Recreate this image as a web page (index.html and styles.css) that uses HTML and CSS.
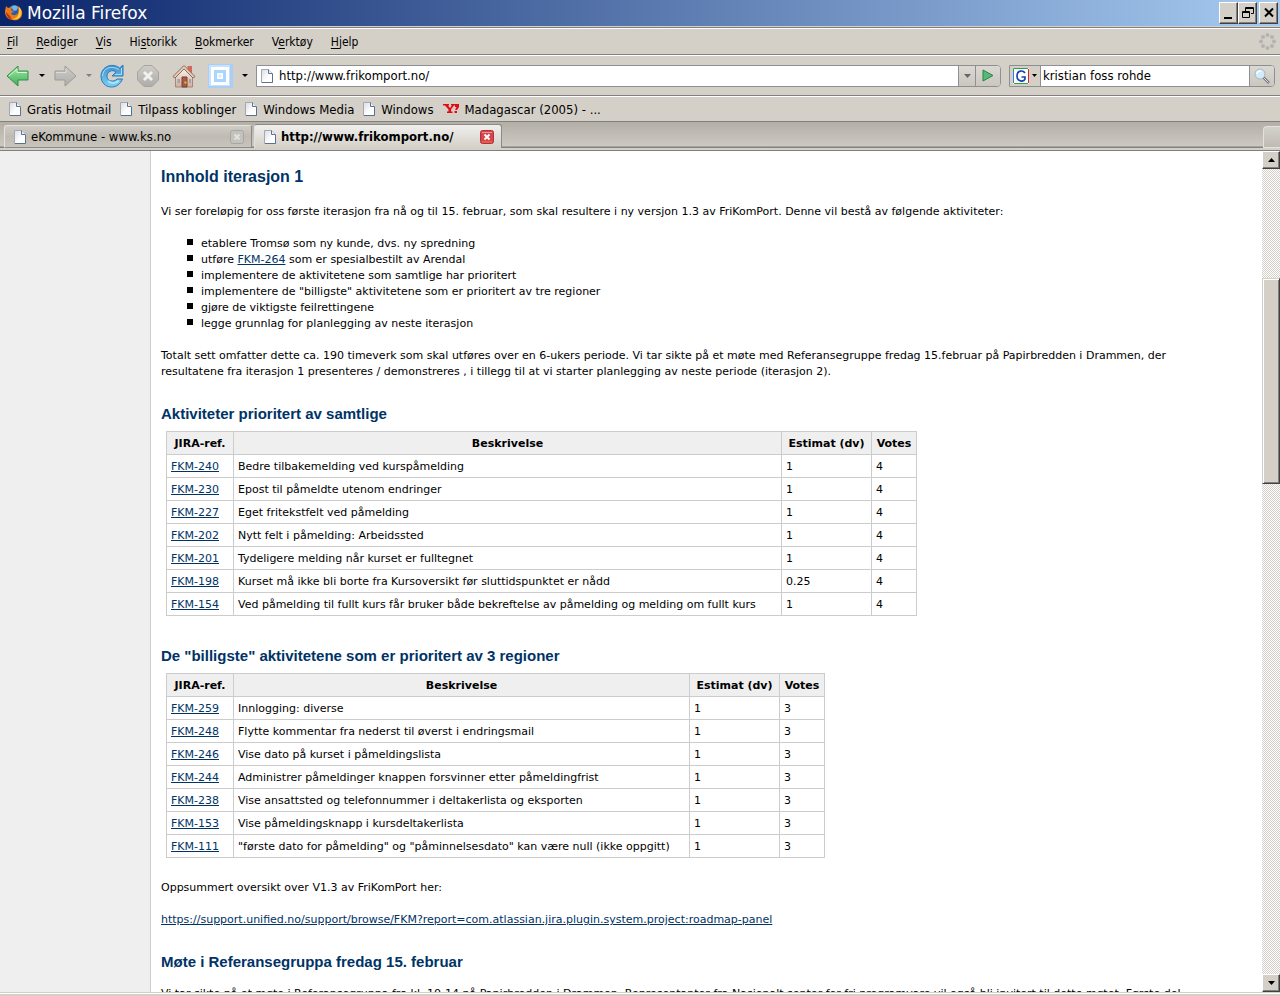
FILE: index.html
```html
<!DOCTYPE html>
<html lang="no">
<head>
<meta charset="utf-8">
<title>Mozilla Firefox</title>
<link rel="stylesheet" href="styles.css">
</head>
<body>
<svg class="defs" width="0" height="0" aria-hidden="true">
  <defs>
    <linearGradient id="paper" x1="0" y1="0" x2="1" y2="1"><stop offset="0" stop-color="#d9dce3"/><stop offset=".6" stop-color="#fff"/></linearGradient>
    <linearGradient id="green" x1="0" y1="0" x2="0" y2="1"><stop offset="0" stop-color="#a5e8a6"/><stop offset="1" stop-color="#3fae57"/></linearGradient>
    <linearGradient id="grey" x1="0" y1="0" x2="0" y2="1"><stop offset="0" stop-color="#cfcdc9"/><stop offset="1" stop-color="#aeaca8"/></linearGradient>
    <linearGradient id="blue" x1="0" y1="0" x2="0" y2="1"><stop offset="0" stop-color="#3c8fd2"/><stop offset="1" stop-color="#7cd0f5"/></linearGradient>
    <linearGradient id="wall" x1="0" y1="0" x2="0" y2="1"><stop offset="0" stop-color="#fbf3ea"/><stop offset="1" stop-color="#cdb09a"/></linearGradient>
    <symbol id="page" viewBox="0 0 12 14"><path d="M.5.5h7l4 4v9H.5z" fill="url(#paper)" stroke="#a3a8b4"/><path d="M11.500 5v8.500H1" fill="none" stroke="#5c7090"/><path d="M7.500.5v4h4" fill="#eef0f5" stroke="#5c7090"/></symbol>
  </defs>
</svg>
<div class="window">
  <header class="titlebar">
    <svg class="fox" width="18" height="18" viewBox="0 0 18 18"><circle cx="9.500" cy="8" r="7" fill="#2c5cae"/><path d="M6 3c2-2 5-2 7 0l-1 3-3 1z" fill="#74b4e6"/><path d="M1 2l2 2 4-1-1 3 3 2-3 1c1 3 5 3 7 0 1-3 0-5-1-7 4 2 6 5 5 9-1 4-5 6-9 5C3 16 0 12 0 8c0-3 1-4 1-6z" fill="#ea7a18"/><path d="M14 3c3 3 3 7 1 10-2 2-5 3-8 2 5 0 8-4 7-12z" fill="#ffd23c"/><path d="M1 8c0 4 3 7 6 8l-2-4z" fill="#bd3410"/></svg>
    <span class="caption">Mozilla Firefox</span>
    <button class="winbtn" aria-label="Minimer"><svg width="14" height="14" viewBox="0 0 14 14"><path d="M2 11h8v2H2z"/></svg></button>
    <button class="winbtn" aria-label="Gjenopprett"><svg width="14" height="14" viewBox="0 0 14 14" fill="none" stroke="#000"><path d="M4.500 5V1.500h8v6H10M4 2.500h9M1.500 5.500h7v6h-7zM1 6.500h8"/></svg></button>
    <button class="winbtn close" aria-label="Lukk"><svg width="14" height="14" viewBox="0 0 14 14"><path d="M3 2.500l8 8M11 2.500l-8 8" stroke="#000" stroke-width="2"/></svg></button>
  </header>

  <nav class="menubar" aria-label="Meny">
    <button><u>F</u>il</button><button><u>R</u>ediger</button><button><u>V</u>is</button><button>Hi<u>s</u>torikk</button><button><u>B</u>okmerker</button><button>V<u>e</u>rktøy</button><button><u>H</u>jelp</button>
    <svg class="throbber" width="17" height="17" viewBox="0 0 17 17" fill="#b5b3af"><circle cx="8.500" cy="2" r="2"/><circle cx="13" cy="4" r="2"/><circle cx="15" cy="8.500" r="2"/><circle cx="13" cy="13" r="2"/><circle cx="8.500" cy="15" r="2"/><circle cx="4" cy="13" r="2"/><circle cx="2" cy="8.500" r="2"/><circle cx="4" cy="4" r="2"/></svg>
  </nav>

  <div class="toolbar">
    <button class="tool" aria-label="Tilbake"><svg width="24" height="24" viewBox="0 0 24 24"><path d="M1 12L12 2v5h10v9H12v6z" fill="url(#green)" stroke="#2f8f4a"/><path d="M3 12l8-7v3.500h10" fill="none" stroke="#d3f7cf"/></svg></button>
    <button class="drop" aria-label="Tilbakehistorikk"></button>
    <button class="tool" aria-label="Frem" disabled><svg width="24" height="24" viewBox="0 0 24 24"><path d="M23 12L12 2v5H2v9h10v6z" fill="url(#grey)" stroke="#9d9b97"/><path d="M3 8.500h10V5" fill="none" stroke="#dedcd8"/></svg></button>
    <button class="drop dim" aria-label="Fremhistorikk" disabled></button>
    <button class="tool reload" aria-label="Oppdater"><svg width="24" height="24" viewBox="0 0 24 24"><path d="M23 1v11H12l4-4C12 5 7 7.500 7 12.500c0 5 7 6 10 2.500h5.500c-2 5-6 8-11 8C5 23 1 18 1 12 1 3 12-2 19.500 4z" fill="url(#blue)" stroke="#2c7ab9"/><path d="M2.500 12C3 4 11 1 19 5.500M15 10.500h6.500V4" fill="none" stroke="#a8dcf5"/><path d="M8 17c3 3 8 2.500 11-.5" fill="none" stroke="#a9e4fa" stroke-width="2"/></svg></button>
    <button class="tool stop" aria-label="Stopp" disabled><svg width="24" height="24" viewBox="0 0 24 24"><path d="M8 1.500h8L22.500 8v8L16 22.500H8L1.500 16V8z" fill="url(#grey)" stroke="#a6a4a0"/><path d="M8 8l8 8M16 8l-8 8" stroke="#f2f1ee" stroke-width="3"/></svg></button>
    <button class="tool home" aria-label="Hjem"><svg width="24" height="24" viewBox="0 0 24 24"><path d="M15.500 2h4.500v8l-4.500-4z" fill="#d2695a"/><path d="M3.500 12L12 4l8.500 8v11h-17z" fill="url(#wall)" stroke="#a98673"/><path d="M1 12.500L12 1.500l11 11-2 1.500-9-9-9 9z" fill="#ddcdbf" stroke="#8f6c5c"/><path d="M10 13h5v10h-5z" fill="#a85a48" stroke="#7b4337"/><path d="M5.500 15h2.500v4H5.500zM17 15h2v4h-2z" fill="#a8a0a4"/><path d="M12.500 17.500h2v2h-2z" fill="#efc431"/></svg></button>
    <button class="tool" aria-label="Bilder"><svg width="25" height="24" viewBox="0 0 25 24"><path d="M0 0h25v24H0z" fill="#a8cffa"/><path d="M1 1h21v21H1z" fill="#c9e2fc"/><path d="M3 3h18v18H3z" fill="#fff"/><path d="M6 6h12v12H6z" fill="#a9d6fc"/><path d="M9 9h6v6H9z" fill="#fff"/><path d="M10.500 10.500h3v3h-3z" fill="#d8ecfe"/></svg></button>
    <button class="drop" aria-label="Bildevalg"></button>
    <form class="address">
      <svg width="12" height="14"><use href="#page"/></svg>
      <input type="text" aria-label="Adresse" value="http://www.frikomport.no/">
      <button type="button" class="fieldbtn hist" aria-label="Adressehistorikk"><svg width="7" height="4" viewBox="0 0 7 4"><path d="M0 0h7L3.500 4z" fill="#666"/></svg></button>
      <button type="button" class="fieldbtn go" aria-label="Gå"><svg width="12" height="13" viewBox="0 0 12 13"><path d="M1 1l10 5.500L1 12z" fill="#59b877" stroke="#218747"/></svg></button>
    </form>
    <form class="search">
      <button type="button" class="engine" aria-label="Søkemotor"><svg width="16" height="16" viewBox="0 0 16 16"><path d="M0 0h16v16H0z" fill="#fff"/><path d="M.5 15V.5H15" fill="none" stroke="#27a24a"/><path d="M15.500 1v14" stroke="#e02222"/><path d="M.5 4v11" stroke="#3979e0"/><path d="M1 15.500h14" stroke="#2ca743"/><path d="M12 5c-2-3-8-3-8 3s7 6 8 3V9H8.500" fill="none" stroke="#1b3fb4" stroke-width="1.700"/></svg><svg width="5" height="3" viewBox="0 0 5 3"><path d="M0 0h5L2.500 3z"/></svg></button>
      <input type="text" aria-label="Søk" value="kristian foss rohde">
      <button type="button" class="fieldbtn find" aria-label="Søk"><svg width="16" height="16" viewBox="0 0 16 16"><path d="M9 9l6 6" stroke="#74777d" stroke-width="2.500"/><path d="M9 9l5.500 5.500" stroke="#d8dade"/><circle cx="6" cy="6" r="5" fill="#d2eafa" stroke="#a4b6c6"/><path d="M3 6c0-2 2-3 4-3" stroke="#fff" fill="none" stroke-width="1.500"/></svg></button>
    </form>
  </div>

  <nav class="bookmarks" aria-label="Bokmerker">
    <a href="#"><svg width="12" height="14"><use href="#page"/></svg>Gratis Hotmail</a>
    <a href="#"><svg width="12" height="14"><use href="#page"/></svg>Tilpass koblinger</a>
    <a href="#"><svg width="12" height="14"><use href="#page"/></svg>Windows Media</a>
    <a href="#"><svg width="12" height="14"><use href="#page"/></svg>Windows</a>
    <a href="#"><svg class="yahoo" width="16" height="10" viewBox="0 0 16 10"><path d="M0 0h6v1.500H5L7 4l2-2.500H8V0h4v1.500h-1L8 5.500v2h1.500V9H4V7.500h1.500v-2L2 1.500H0zM12 0h4v3l-2 3h-2l1.500-3H12zM11.500 7H14v2h-2.500z" fill="#e30a12"/></svg>Madagascar (2005) - ...</a>
  </nav>

  <div class="tabs" role="tablist">
    <div class="tab"><svg width="12" height="14"><use href="#page"/></svg><button role="tab">eKommune - www.ks.no</button><button class="shut" aria-label="Lukk fane"><svg width="14" height="14" viewBox="0 0 14 14"><rect x=".5" y=".5" width="13" height="13" rx="2" fill="#c4c2bd" stroke="#a8a6a1"/><path d="M4.500 4.500l5 5M9.500 4.500l-5 5" stroke="#e4e2de" stroke-width="2"/></svg></button></div>
    <div class="tab active"><svg width="12" height="14"><use href="#page"/></svg><button role="tab" aria-selected="true">http://www.frikomport.no/</button><button class="shut" aria-label="Lukk fane"><svg width="14" height="14" viewBox="0 0 14 14"><rect x=".5" y=".5" width="13" height="13" rx="2" fill="#d9434b" stroke="#b3323a"/><path d="M2 2.500h10" stroke="#ee9095"/><path d="M2 12h10" stroke="#ef7a42"/><path d="M4.500 4.500l5 5M9.500 4.500l-5 5" stroke="#fff" stroke-width="2"/></svg></button></div>
    <div class="alltabs"></div>
  </div>

  <div class="viewport">
    <aside class="side"></aside>
    <main class="content">
      <h2>Innhold iterasjon 1</h2>
      <p>Vi ser foreløpig for oss første iterasjon fra nå og til 15. februar, som skal resultere i ny versjon 1.3 av FriKomPort. Denne vil bestå av følgende aktiviteter:</p>
      <ul>
        <li>etablere Tromsø som ny kunde, dvs. ny spredning</li>
        <li>utføre <a href="#">FKM-264</a> som er spesialbestilt av Arendal</li>
        <li>implementere de aktivitetene som samtlige har prioritert</li>
        <li>implementere de "billigste" aktivitetene som er prioritert av tre regioner</li>
        <li>gjøre de viktigste feilrettingene</li>
        <li>legge grunnlag for planlegging av neste iterasjon</li>
      </ul>
      <p>Totalt sett omfatter dette ca. 190 timeverk som skal utføres over en 6-ukers periode. Vi tar sikte på et møte med Referansegruppe fredag 15.februar på Papirbredden i Drammen, der resultatene fra iterasjon 1 presenteres / demonstreres , i tillegg til at vi starter planlegging av neste periode (iterasjon 2).</p>
      <h3>Aktiviteter prioritert av samtlige</h3>
      <table class="all">
        <thead><tr><th class="ref">JIRA-ref.</th><th class="desc">Beskrivelse</th><th class="est">Estimat (dv)</th><th class="votes">Votes</th></tr></thead>
        <tbody>
          <tr><td><a href="#">FKM-240</a></td><td>Bedre tilbakemelding ved kurspåmelding</td><td>1</td><td>4</td></tr>
          <tr><td><a href="#">FKM-230</a></td><td>Epost til påmeldte utenom endringer</td><td>1</td><td>4</td></tr>
          <tr><td><a href="#">FKM-227</a></td><td>Eget fritekstfelt ved påmelding</td><td>1</td><td>4</td></tr>
          <tr><td><a href="#">FKM-202</a></td><td>Nytt felt i påmelding: Arbeidssted</td><td>1</td><td>4</td></tr>
          <tr><td><a href="#">FKM-201</a></td><td>Tydeligere melding når kurset er fulltegnet</td><td>1</td><td>4</td></tr>
          <tr><td><a href="#">FKM-198</a></td><td>Kurset må ikke bli borte fra Kursoversikt før sluttidspunktet er nådd</td><td>0.25</td><td>4</td></tr>
          <tr><td><a href="#">FKM-154</a></td><td>Ved påmelding til fullt kurs får bruker både bekreftelse av påmelding og melding om fullt kurs</td><td>1</td><td>4</td></tr>
        </tbody>
      </table>
      <h3>De "billigste" aktivitetene som er prioritert av 3 regioner</h3>
      <table class="three">
        <thead><tr><th class="ref">JIRA-ref.</th><th class="desc">Beskrivelse</th><th class="est">Estimat (dv)</th><th class="votes">Votes</th></tr></thead>
        <tbody>
          <tr><td><a href="#">FKM-259</a></td><td>Innlogging: diverse</td><td>1</td><td>3</td></tr>
          <tr><td><a href="#">FKM-248</a></td><td>Flytte kommentar fra nederst til øverst i endringsmail</td><td>1</td><td>3</td></tr>
          <tr><td><a href="#">FKM-246</a></td><td>Vise dato på kurset i påmeldingslista</td><td>1</td><td>3</td></tr>
          <tr><td><a href="#">FKM-244</a></td><td>Administrer påmeldinger knappen forsvinner etter påmeldingfrist</td><td>1</td><td>3</td></tr>
          <tr><td><a href="#">FKM-238</a></td><td>Vise ansattsted og telefonnummer i deltakerlista og eksporten</td><td>1</td><td>3</td></tr>
          <tr><td><a href="#">FKM-153</a></td><td>Vise påmeldingsknapp i kursdeltakerlista</td><td>1</td><td>3</td></tr>
          <tr><td><a href="#">FKM-111</a></td><td>"første dato for påmelding" og "påminnelsesdato" kan være null (ikke oppgitt)</td><td>1</td><td>3</td></tr>
        </tbody>
      </table>
      <p class="after">Oppsummert oversikt over V1.3 av FriKomPort her:</p>
      <p><a href="#">https://support.unified.no/support/browse/FKM?report=com.atlassian.jira.plugin.system.project:roadmap-panel</a></p>
      <h3 class="last">Møte i Referansegruppa fredag 15. februar</h3>
      <p>Vi tar sikte på et møte i Referansegruppa fra kl. 10-14 på Papirbredden i Drammen. Representanter fra Nasjonalt senter for fri programvare vil også bli invitert til dette møtet. Første del</p>
    </main>
    <div class="scrollbar">
      <button class="arrow" aria-label="Rull opp"><svg width="7" height="4" viewBox="0 0 7 4"><path d="M0 4h7L3.500 0z"/></svg></button>
      <div class="track"><div class="thumb"></div></div>
      <button class="arrow" aria-label="Rull ned"><svg width="7" height="4" viewBox="0 0 7 4"><path d="M0 0h7L3.500 4z"/></svg></button>
    </div>
  </div>
  <footer class="edge"></footer>
</div>
</body>
</html>
```
FILE: styles.css
```css
* { box-sizing: border-box; }
body { margin: 0; background: #d4d0c8; font-family: "DejaVu Sans Condensed", "DejaVu Sans", Tahoma, sans-serif; font-size: 13px; color: #000; }
button, input { font: inherit; color: inherit; border: 0; background: none; padding: 0; margin: 0; }
svg { display: block; flex: none; }
.defs { position: absolute; }
.window { display: flex; flex-direction: column; height: 100vh; overflow: hidden; }

.titlebar { display: flex; align-items: center; flex: none; height: 26px; padding: 0 2px 0 5px; background: linear-gradient(90deg, #0a246a, #a6caf0); }
.caption { flex: 1; margin-left: 4px; color: #fff; font-family: "DejaVu Sans", sans-serif; font-size: 17px; line-height: 26px; }
.winbtn, .arrow { display: flex; align-items: center; justify-content: center; background: #d4d0c8; border: 1px solid; border-color: #fff #404040 #404040 #fff; box-shadow: inset -1px -1px #808080; }
.winbtn { width: 19px; height: 22px; }
.winbtn.close { margin-left: 2px; }

.menubar { display: flex; align-items: center; flex: none; height: 29px; gap: 18px; padding: 2px 4px 0 7px; border-top: 1px solid #d4d0c8; border-bottom: 1px solid #808080; box-shadow: inset 0 1px #808080, inset 0 2px #fff; font-size: 12px; }
.menubar u { text-underline-offset: 2px; }
.throbber { margin-left: auto; }

.toolbar { display: flex; align-items: center; flex: none; height: 41px; padding: 0 5px 0 6px; border-top: 1px solid #fff; border-bottom: 1px solid #808080; }
.tool { display: flex; }
.drop { width: 23px; height: 24px; display: flex; align-items: center; justify-content: center; }
.drop::after { content: ""; border: 3px solid transparent; border-top-color: #000; border-bottom: 0; }
.drop.dim::after { border-top-color: #808080; }
.stop, .home { margin-left: 12px; }
.home { margin-right: 12px; }
.address, .search { display: flex; align-items: center; height: 22px; border: 1px solid #8c8f94; background: #fff; border-radius: 0 4px 4px 0; overflow: hidden; }
.address { flex: 1; min-width: 0; padding-left: 4px; margin-right: 8px; }
.address input { flex: 1; min-width: 0; margin-left: 6px; }
.search { width: 266px; }
.search input { flex: 1; min-width: 0; padding-left: 2px; }
.engine { display: flex; align-items: center; gap: 3px; width: 31px; height: 20px; padding-left: 3px; background: #d4d0c8; border-right: 1px solid #8c8f94; }
.fieldbtn { display: flex; align-items: center; justify-content: center; height: 20px; width: 25px; background: linear-gradient(#dcd9d3, #cbc7bf); border-left: 1px solid #8c8f94; }
.hist { width: 17px; }

.bookmarks { display: flex; align-items: center; flex: none; height: 26px; gap: 9px; padding: 0 9px; border-top: 1px solid #fff; border-bottom: 1px solid #808080; }
.bookmarks a { display: flex; align-items: center; gap: 6px; color: #000; text-decoration: none; }

.tabs { display: flex; align-items: flex-end; flex: none; height: 29px; gap: 2px; padding: 0 0 3px 4px; background: linear-gradient(#b3aea6, #cdc9c2 24px, #808080 25px, #808080 26px, #d4d0c8 26px, #d4d0c8 28px, #808080 28px); }
.tab { display: flex; align-items: center; width: 248px; height: 23px; padding: 0 7px 0 9px; border: 1px solid #8c8a86; border-top-color: #e4e2dd; border-left-color: #e4e2dd; border-radius: 3px 3px 0 0; background: linear-gradient(#cfccc6, #bfbbb3 50%, #c9c5be); }
.tab button:first-of-type { flex: 1; margin-left: 5px; text-align: left; white-space: nowrap; }
.tab.active { border-bottom: 0; border-top-color: #8c8a86; height: 24px; background: linear-gradient(#f0efec, #d4d0c8); font-weight: bold; }
.alltabs { width: 17px; height: 22px; margin-left: auto; border: 1px solid #e4e2dd; border-right: 0; border-radius: 4px 0 0 0; background: linear-gradient(#d4d1cb, #bfbbb3); }

.viewport { display: flex; flex: 1; min-height: 0; background: #fff; }
.side { flex: none; width: 151px; background: #efefef; border-right: 1px solid #ccc; }
.content { flex: 1; min-width: 0; overflow: hidden; padding: 16px 30px 0 10px; font-family: Verdana, "DejaVu Sans", sans-serif; font-size: 11px; line-height: 16px; }
.content a { color: #036; }
.content h2, .content h3 { margin: 0; color: #036; font-family: "Liberation Sans", Arial, sans-serif; }
.content h2 { font-size: 16px; line-height: 20px; margin-bottom: 17px; }
.content h3 { font-size: 15px; line-height: 18px; margin: 25px 0 8px; }
.content p { margin: 0 0 16px; }
.content ul { margin: 0 0 16px; padding-left: 26px; list-style: none; }
.content li { padding-left: 14px; background: linear-gradient(#000, #000) 0 3px / 6px 6px no-repeat; }
.content table { margin: 0 0 31px 5px; border-collapse: collapse; }
.content th, .content td { padding: 4px 4px 2px; border: 1px solid #ccc; text-align: left; white-space: nowrap; }
.content th { background: #efefef; text-align: center; }
.content .ref { width: 67px; }
.content .est { width: 90px; }
.content .votes { width: 45px; }
.all .desc { width: 548px; }
.three .desc { width: 456px; }
.content .after { margin-top: -9px; }
.content h3.last { margin-bottom: 15px; }

.scrollbar { display: flex; flex-direction: column; flex: none; width: 18px; }
.arrow { height: 18px; width: 18px; }
.track { flex: 1; padding-top: 109px; background: repeating-conic-gradient(#d4d0c8 0 25%, #fff 0 50%) 0 0 / 2px 2px; }
.thumb { height: 206px; background: #d4d0c8; border: 1px solid; border-color: #d4d0c8 #404040 #404040 #d4d0c8; box-shadow: inset 1px 1px #fff, inset -1px -1px #808080; }
.edge { flex: none; height: 4px; background: #d4d0c8; border-bottom: 1px solid #d4d0c8; box-shadow: inset 0 1px #d4d0c8, inset 0 2px #fff; }
```
